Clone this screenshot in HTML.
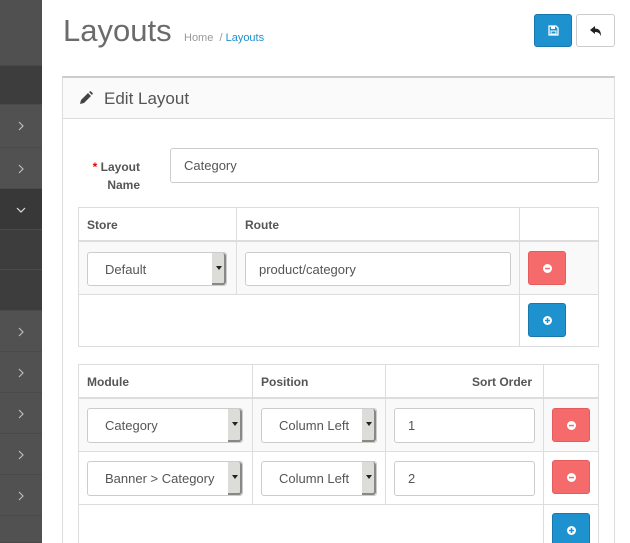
<!DOCTYPE html>
<html style="width:630px;height:543px;overflow:hidden"><head><meta charset="utf-8"><style>
*{box-sizing:border-box;margin:0;padding:0}
body{width:630px;height:543px;overflow:hidden;background:#fff;font-family:"Liberation Sans",sans-serif;font-size:13px;color:#666;position:relative}
.sb{position:absolute;left:0;top:0;width:42px;height:543px;background:#515151}
.sb div{position:absolute;left:0;width:42px;border-bottom:1px solid #4a4a4a}
.sb svg{position:absolute;left:18px;top:16px}
.abs{position:absolute}
h1{position:absolute;left:63px;top:13px;font-size:31px;font-weight:normal;color:#6b6b6b}
.bc{position:absolute;left:184px;top:32px;font-size:11px;color:#999}
.bc span{color:#1e91cf}
.btn{position:absolute;border-radius:3px}
.panel{position:absolute;left:62px;top:76px;width:553px;height:480px;border:1px solid #ddd;border-top:2px solid #ccc}
.ph{height:41px;background:#fafafa;border-bottom:1px solid #ddd;font-size:17px;color:#555;padding:11px 0 0 41px;position:relative}
.inp{position:absolute;border:1px solid #ccc;border-radius:3px;background:#fff;font-size:13px;color:#555;padding-left:13px;display:flex;align-items:center}
.sel{position:absolute;border:1px solid #ccc;border-radius:3px;background:#fff;font-size:13px;color:#555;display:flex;align-items:center}
.sel .ar{position:absolute;right:0;top:0;bottom:0;width:14px;background:#dcdcd8;border-right:2px solid #888;border-bottom:2px solid #888;border-radius:0 3px 3px 0}
.sel .ar:after{content:"";position:absolute;left:4px;top:13px;border:3px solid transparent;border-top:4px solid #222}
.tb{position:absolute;border:1px solid #ddd}
.th{position:absolute;font-weight:bold;font-size:12px;color:#555}
.red{position:absolute;width:38px;height:34px;background:#f56b6b;border:1px solid #e65c5c;border-radius:3px}
.blue{position:absolute;width:38px;height:34px;background:#1e91cf;border:1px solid #1978ab;border-radius:3px}
.red svg,.blue svg{position:absolute;left:14px;top:12px}
.hl{position:absolute;height:1px;background:#ddd}
.vl{position:absolute;width:1px;background:#ddd}
</style></head><body>
<div class="sb">
<div style="top:0;height:66px;background:#505050"></div>
<div style="top:66px;height:39px;background:#3d3d3d"></div>
<div style="top:105px;height:43px"><svg width="6" height="10" viewBox="0 0 6 10"><path d="M1 1l4 4-4 4" fill="none" stroke="#bbb" stroke-width="1.2"/></svg></div>
<div style="top:148px;height:41px"><svg width="6" height="10" viewBox="0 0 6 10"><path d="M1 1l4 4-4 4" fill="none" stroke="#bbb" stroke-width="1.2"/></svg></div>
<div style="top:189px;height:41px;background:#383838"><svg style="left:16px;top:18px" width="10" height="6" viewBox="0 0 10 6"><path d="M1 1l4 4 4-4" fill="none" stroke="#ddd" stroke-width="1.2"/></svg></div>
<div style="top:230px;height:40px;background:#3d3d3d"></div>
<div style="top:270px;height:41px;background:#3d3d3d"></div>
<div style="top:311px;height:41px"><svg width="6" height="10" viewBox="0 0 6 10"><path d="M1 1l4 4-4 4" fill="none" stroke="#bbb" stroke-width="1.2"/></svg></div>
<div style="top:352px;height:41px"><svg width="6" height="10" viewBox="0 0 6 10"><path d="M1 1l4 4-4 4" fill="none" stroke="#bbb" stroke-width="1.2"/></svg></div>
<div style="top:393px;height:41px"><svg width="6" height="10" viewBox="0 0 6 10"><path d="M1 1l4 4-4 4" fill="none" stroke="#bbb" stroke-width="1.2"/></svg></div>
<div style="top:434px;height:41px"><svg width="6" height="10" viewBox="0 0 6 10"><path d="M1 1l4 4-4 4" fill="none" stroke="#bbb" stroke-width="1.2"/></svg></div>
<div style="top:475px;height:41px"><svg width="6" height="10" viewBox="0 0 6 10"><path d="M1 1l4 4-4 4" fill="none" stroke="#bbb" stroke-width="1.2"/></svg></div>
<div style="top:516px;height:27px"></div>
</div>
<h1>Layouts</h1>
<div class="bc">Home &nbsp;/ <span>Layouts</span></div>
<div class="btn" style="left:534px;top:14px;width:38px;height:33px;background:#1e91cf;border:1px solid #1978ab">
<svg class="abs" style="left:13px;top:10px" width="11" height="11" viewBox="0 0 11 11"><path d="M1 1h7l2 2v7H1z" fill="none" stroke="#fff" stroke-width="1.3"/><rect x="3" y="1" width="4" height="3" fill="#fff"/><rect x="3" y="6" width="5" height="3" fill="none" stroke="#fff"/></svg></div>
<div class="btn" style="left:576px;top:14px;width:39px;height:33px;background:#fff;border:1px solid #ccc">
<svg class="abs" style="left:12px;top:10px" width="14" height="12" viewBox="0 0 14 12"><path d="M1 5L6 1v2.5c4 0 6 2.5 6 7.5-1.5-3-3-4-6-4V9z" fill="#222"/></svg></div>
<div class="panel">
<div class="ph"><svg class="abs" style="left:16px;top:13px" width="14" height="14" viewBox="0 0 14 14"><path d="M1 13l1-4 7-7 3 3-7 7z M10 1l1.5-1 2.5 2.5-1 1.5z" fill="#444"/></svg>Edit Layout</div>
</div>
<div class="abs" style="left:88px;top:158px;font-weight:bold;font-size:12px;color:#555;text-align:right;width:52px;line-height:18px"><span style="color:#e00">*</span> Layout Name</div>
<div class="inp" style="left:170px;top:148px;width:429px;height:35px">Category</div>

<div class="tb" style="left:78px;top:207px;width:521px;height:140px"></div>
<div class="hl" style="left:78px;top:240px;width:521px;height:2px"></div>
<div class="abs" style="left:79px;top:242px;width:519px;height:52px;background:#f9f9f9"></div>
<div class="hl" style="left:78px;top:294px;width:521px"></div>
<div class="vl" style="left:236px;top:207px;height:87px"></div>
<div class="vl" style="left:519px;top:207px;height:140px"></div>
<div class="th" style="left:87px;top:218px">Store</div>
<div class="th" style="left:245px;top:218px">Route</div>
<div class="sel" style="left:87px;top:252px;width:140px;height:34px;padding-left:17px">Default<div class="ar"></div></div>
<div class="inp" style="left:245px;top:252px;width:266px;height:34px">product/category</div>
<div class="red" style="left:528px;top:251px"><svg width="9" height="9" viewBox="0 0 9 9"><circle cx="4.5" cy="4.5" r="4.5" fill="#fff"/><rect x="2" y="3.8" width="5" height="1.5" fill="#f56b6b"/></svg></div>
<div class="blue" style="left:528px;top:303px"><svg width="9" height="9" viewBox="0 0 9 9"><circle cx="4.5" cy="4.5" r="4.5" fill="#fff"/><path d="M2 4.5h5M4.5 2v5" stroke="#1e91cf" stroke-width="1.5"/></svg></div>

<div class="tb" style="left:78px;top:364px;width:521px;height:200px"></div>
<div class="hl" style="left:78px;top:397px;width:521px;height:2px"></div>
<div class="abs" style="left:79px;top:399px;width:519px;height:52px;background:#f9f9f9"></div>
<div class="hl" style="left:78px;top:451px;width:521px"></div>
<div class="hl" style="left:78px;top:504px;width:521px"></div>
<div class="vl" style="left:252px;top:364px;height:140px"></div>
<div class="vl" style="left:385px;top:364px;height:140px"></div>
<div class="vl" style="left:543px;top:364px;height:180px"></div>
<div class="th" style="left:87px;top:375px">Module</div>
<div class="th" style="left:261px;top:375px">Position</div>
<div class="th" style="left:472px;top:375px">Sort Order</div>
<div class="sel" style="left:87px;top:408px;width:156px;height:35px;padding-left:17px">Category<div class="ar"></div></div>
<div class="sel" style="left:261px;top:408px;width:116px;height:35px;padding-left:17px">Column Left<div class="ar"></div></div>
<div class="inp" style="left:394px;top:408px;width:141px;height:35px">1</div>
<div class="red" style="left:552px;top:408px"><svg width="9" height="9" viewBox="0 0 9 9"><circle cx="4.5" cy="4.5" r="4.5" fill="#fff"/><rect x="2" y="3.8" width="5" height="1.5" fill="#f56b6b"/></svg></div>
<div class="sel" style="left:87px;top:461px;width:156px;height:35px;padding-left:17px">Banner &gt; Category<div class="ar"></div></div>
<div class="sel" style="left:261px;top:461px;width:116px;height:35px;padding-left:17px">Column Left<div class="ar"></div></div>
<div class="inp" style="left:394px;top:461px;width:141px;height:35px">2</div>
<div class="red" style="left:552px;top:460px"><svg width="9" height="9" viewBox="0 0 9 9"><circle cx="4.5" cy="4.5" r="4.5" fill="#fff"/><rect x="2" y="3.8" width="5" height="1.5" fill="#f56b6b"/></svg></div>
<div class="blue" style="left:552px;top:513px"><svg width="9" height="9" viewBox="0 0 9 9"><circle cx="4.5" cy="4.5" r="4.5" fill="#fff"/><path d="M2 4.5h5M4.5 2v5" stroke="#1e91cf" stroke-width="1.5"/></svg></div>
</body></html>
